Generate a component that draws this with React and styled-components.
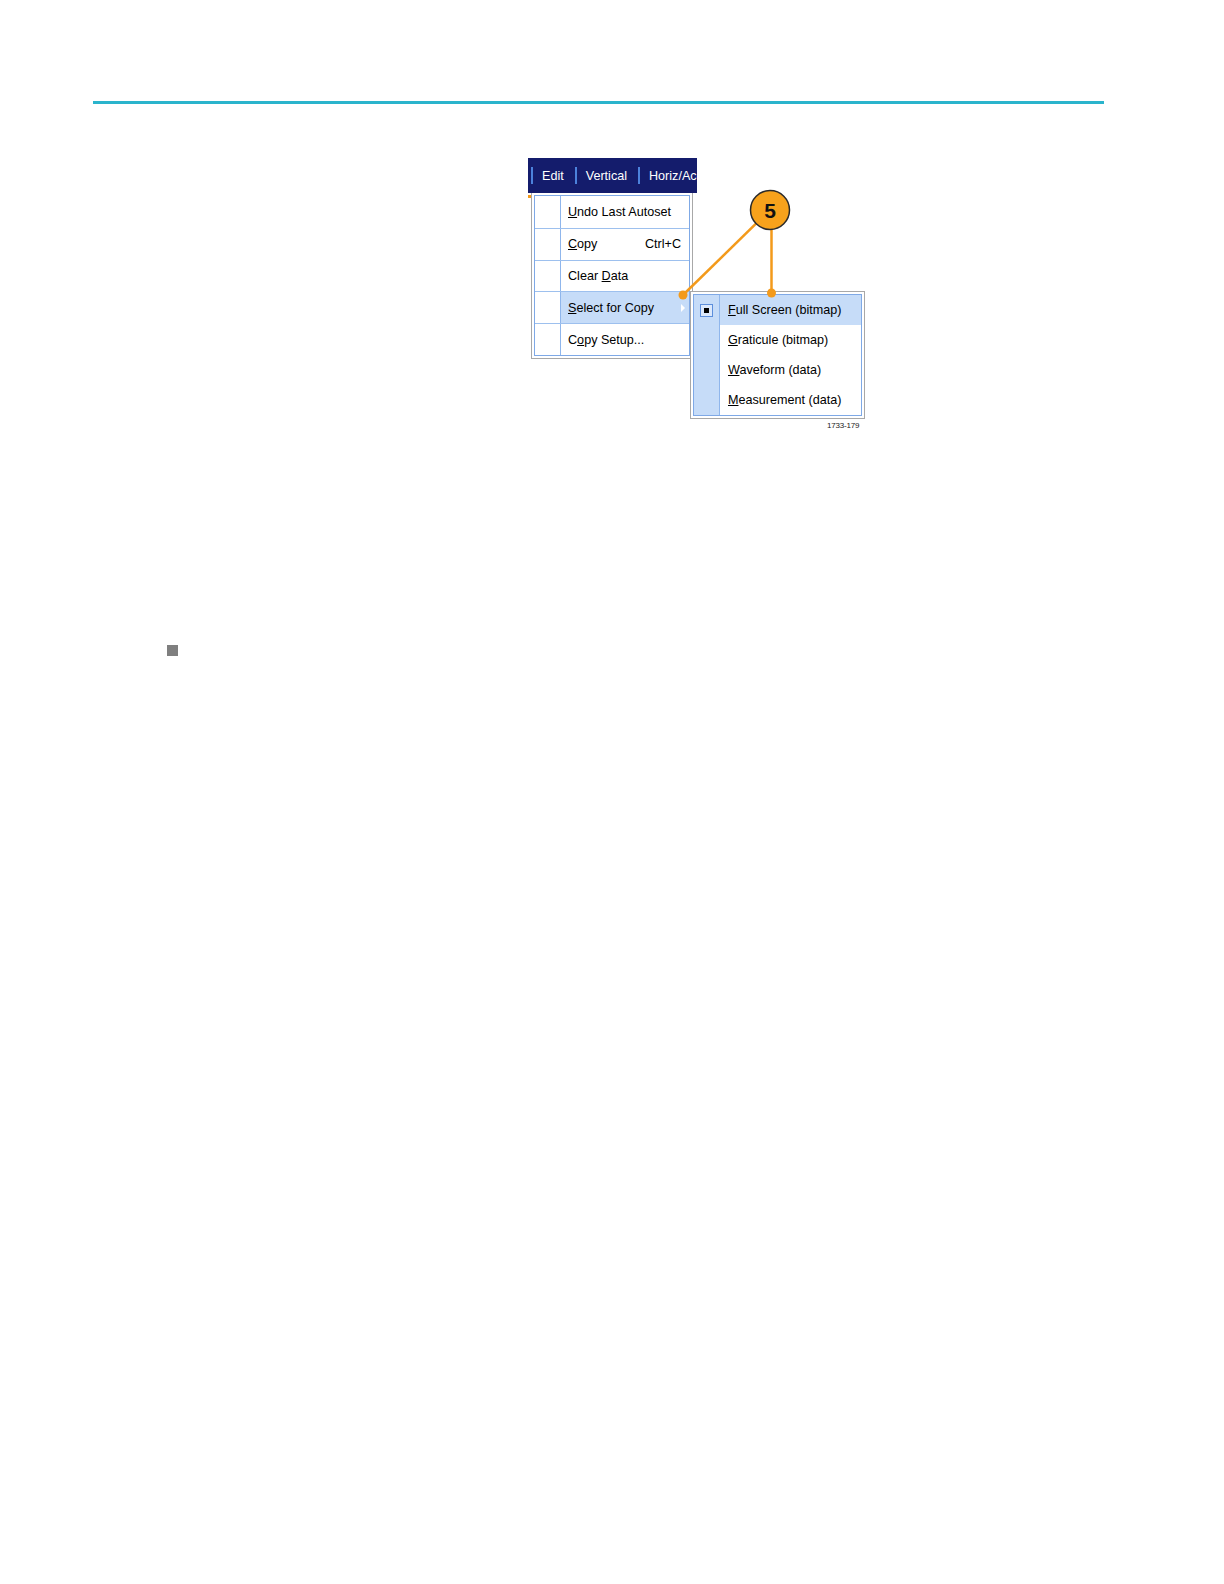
import React from 'react';
import styled, { createGlobalStyle } from 'styled-components';

const GlobalStyle = createGlobalStyle`
  body {
    margin: 0;
    background: #fff;
    font-family: "Liberation Sans", Arial, sans-serif;
  }
`;

const Page = styled.div`
  padding-top: 101px;
  height: 1483px;
`;

const Rule = styled.div`
  margin-left: 93px;
  width: 1011px;
  height: 3px;
  background: #2ab4cc;
`;

const Figure = styled.div`
  position: relative;
  margin: 54px 0 0 528px;
  width: 340px;
  height: 280px;
`;

const MenuBar = styled.div`
  display: flex;
  align-items: center;
  width: 169px;
  height: 35px;
  box-sizing: border-box;
  padding-left: 3px;
  background: #141c6c;
  overflow: hidden;
  white-space: nowrap;
`;

const BarSep = styled.span`
  flex: none;
  width: 2px;
  height: 17px;
  background: #4c82dc;
`;

const BarItem = styled.span`
  flex: none;
  padding: 0 11px 0 9px;
  color: #fff;
  font-size: 12.6px;
`;

const Dropdown = styled.div`
  margin-left: 3px;
  width: 162px;
  box-sizing: border-box;
  border: 1px solid #a8a8a8;
  border-top: none;
  padding: 2px;
  background: #fff;
`;

const SubMenu = styled.div`
  position: absolute;
  left: 162px;
  top: 133px;
  width: 175px;
  box-sizing: border-box;
  border: 1px solid #a8a8a8;
  padding: 2px;
  background: #fff;
`;

const MenuBox = styled.div`
  border: 1px solid #7fa9e6;
`;

const Row = styled.div`
  display: flex;
  height: ${p => p.$h}px;
  box-sizing: border-box;
  font-size: 12.6px;
  color: #000;
  border-top: ${p => (p.$divider ? '1px solid #9dc0ee' : 'none')};
`;

const IconCell = styled.div`
  flex: none;
  width: 25px;
  display: flex;
  align-items: center;
  justify-content: center;
  border-right: 1px solid #8fb6ec;
  background: ${p => (p.$tint ? '#c6dcf8' : '#fff')};
`;

const TextCell = styled.div`
  flex: 1;
  display: flex;
  align-items: center;
  justify-content: space-between;
  padding: 0 8px 0 ${p => p.$indent}px;
  background: ${p => (p.$active ? '#c6dcf8' : 'transparent')};
`;

const Arrow = styled.span`
  width: 0;
  height: 0;
  margin-right: -4px;
  border-left: 4px solid #fff;
  border-top: 4px solid transparent;
  border-bottom: 4px solid transparent;
`;

const Check = styled.span`
  position: relative;
  width: 13px;
  height: 13px;
  box-sizing: border-box;
  border: 1px solid #5d8fdc;
  background: #dbe8fb;
  &::after {
    content: '';
    position: absolute;
    left: 3px;
    top: 3px;
    width: 5px;
    height: 5px;
    background: #000;
  }
`;

const U = styled.span`
  text-decoration: underline;
`;

const Callout = styled.svg`
  position: absolute;
  left: 0;
  top: 0;
  overflow: visible;
  pointer-events: none;
`;

const FigNum = styled.span`
  position: absolute;
  left: 299px;
  top: 263px;
  font-size: 8px;
  color: #222;
  letter-spacing: -0.2px;
`;

const Bullet = styled.div`
  margin: 207px 0 0 167px;
  width: 11px;
  height: 11px;
  background: #7f7f7f;
`;

const mainItems = [
  { label: <><U>U</U>ndo Last Autoset</> },
  { label: <><U>C</U>opy</>, key: 'Ctrl+C' },
  { label: <>Clear <U>D</U>ata</> },
  { label: <><U>S</U>elect for Copy</>, active: true, sub: true },
  { label: <>C<U>o</U>py Setup...</> },
];

const subItems = [
  { label: <><U>F</U>ull Screen (bitmap)</>, active: true, checked: true },
  { label: <><U>G</U>raticule (bitmap)</> },
  { label: <><U>W</U>aveform (data)</> },
  { label: <><U>M</U>easurement (data)</> },
];

const ORANGE = '#f39a1b';

export default function App() {
  return (
    <Page>
      <GlobalStyle />
      <Rule />
      <Figure>
        <MenuBar>
          <BarSep />
          <BarItem>Edit</BarItem>
          <BarSep />
          <BarItem>Vertical</BarItem>
          <BarSep />
          <BarItem>Horiz/Acq</BarItem>
        </MenuBar>
        <Dropdown>
          <MenuBox>
            {mainItems.map((it, i) => (
              <Row key={i} $h={31.8} $divider={i > 0}>
                <IconCell />
                <TextCell $indent={7} $active={it.active}>
                  <span>{it.label}</span>
                  {it.key && <span>{it.key}</span>}
                  {it.sub && <Arrow />}
                </TextCell>
              </Row>
            ))}
          </MenuBox>
        </Dropdown>
        <SubMenu>
          <MenuBox>
            {subItems.map((it, i) => (
              <Row key={i} $h={30}>
                <IconCell $tint>{it.checked && <Check />}</IconCell>
                <TextCell $indent={8} $active={it.active}>
                  <span>{it.label}</span>
                </TextCell>
              </Row>
            ))}
          </MenuBox>
        </SubMenu>
        <Callout width="340" height="280" viewBox="0 0 340 280">
          <rect x="0" y="37" width="3" height="3" fill={ORANGE} />
          <line x1="242" y1="52" x2="155" y2="137" stroke={ORANGE} strokeWidth="2.5" />
          <line x1="243.5" y1="52" x2="243.5" y2="135" stroke={ORANGE} strokeWidth="2.5" />
          <circle cx="155" cy="137" r="4.5" fill={ORANGE} />
          <circle cx="243.5" cy="135" r="4.5" fill={ORANGE} />
          <circle cx="242" cy="52" r="19.5" fill="#f7a21c" stroke="#2a2a2a" strokeWidth="1.5" />
          <text x="242" y="60" textAnchor="middle" fontFamily="Liberation Sans, Arial, sans-serif" fontWeight="bold" fontSize="21" fill="#111">5</text>
        </Callout>
        <FigNum>1733-179</FigNum>
      </Figure>
      <Bullet />
    </Page>
  );
}
